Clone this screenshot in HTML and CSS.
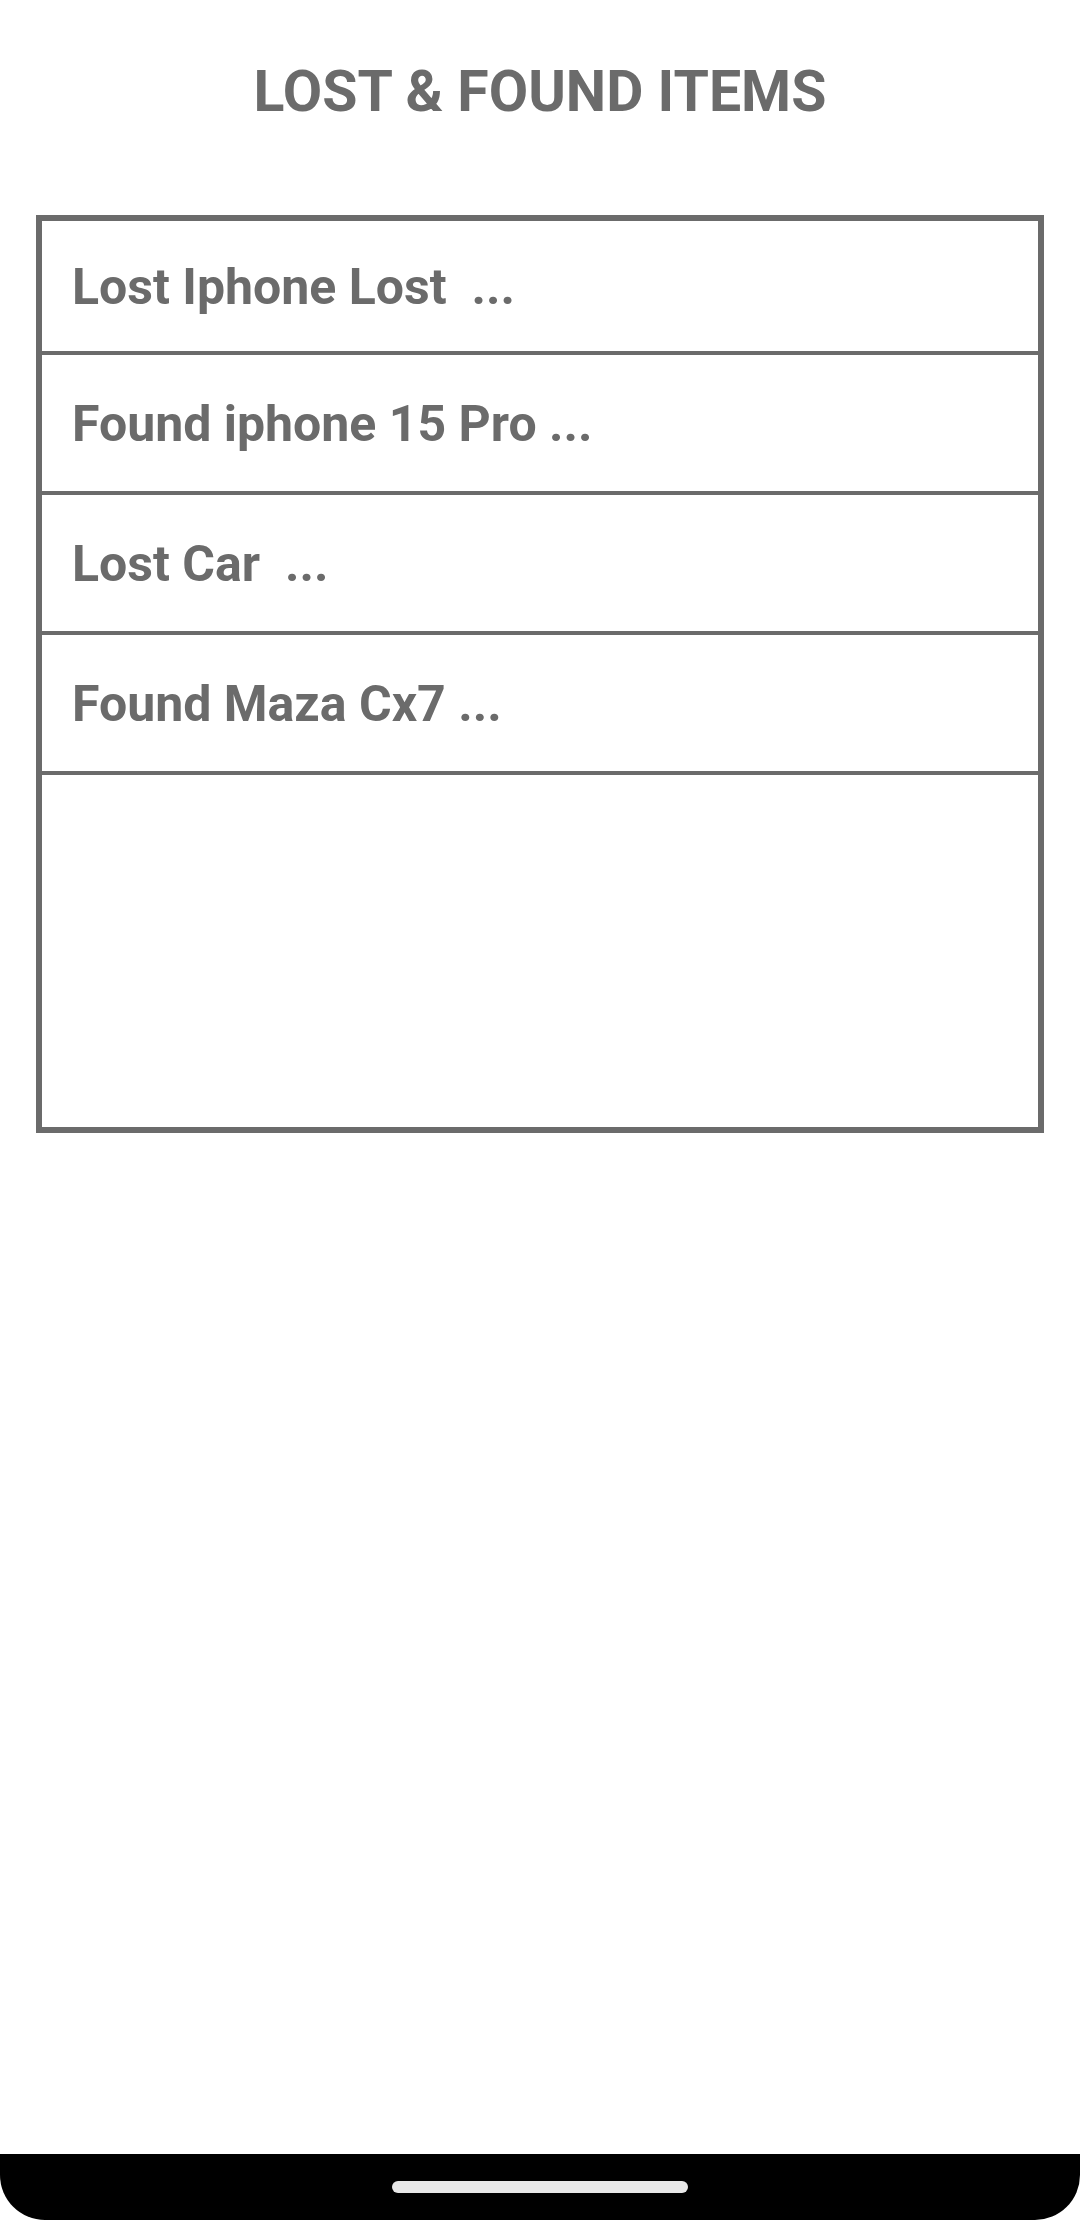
FILE: index.html
```html
<!DOCTYPE html>
<html lang="en">
<head>
<meta charset="utf-8">
<title>Lost &amp; Found Items</title>
<link rel="stylesheet" href="styles.css">
</head>
<body>
<div class="screen">
  <main class="content">
    <h1 class="title">LOST &amp; FOUND ITEMS</h1>
    <div class="list">
      <div class="row">Lost Iphone Lost  ...</div>
      <div class="row">Found iphone 15 Pro ...</div>
      <div class="row">Lost Car  ...</div>
      <div class="row">Found Maza Cx7 ...</div>
    </div>
  </main>
  <div class="navbar"><div class="pill"></div></div>
</div>
</body>
</html>
```

FILE: styles.css
```css
html, body {
  margin: 0;
  padding: 0;
  background: #ffffff;
}
body {
  font-family: Roboto, "Noto Sans", "Liberation Sans", sans-serif;
  color: #6b6b6b;
}
.screen {
  width: 1080px;
  height: 2220px;
  display: flex;
  flex-direction: column;
}
.content {
  flex: 1;
  padding: 58px 36px 0;
}
.title {
  margin: 0 0 89px;
  font-size: 57.2px;
  line-height: 68px;
  font-weight: 700;
  text-align: center;
  color: #6b6b6b;
}
.list {
  height: 918px;
  box-sizing: border-box;
  border: 6px solid #6b6b6b;
}
.row {
  height: 136px;
  box-sizing: border-box;
  padding-top: 2px;
  border-bottom: 4px solid #6b6b6b;
  display: flex;
  align-items: center;
  padding-left: 30px;
  font-size: 50px;
  font-weight: 700;
  white-space: pre;
}
.row {
  height: 140px;
}
.row:first-child {
  height: 134px;
}
.navbar {
  height: 66px;
  background: #000000;
  border-radius: 0 0 45px 45px;
  display: flex;
  align-items: center;
  justify-content: center;
}
.pill {
  width: 296px;
  height: 12px;
  border-radius: 6px;
  background: #e8e8e8;
}
```
